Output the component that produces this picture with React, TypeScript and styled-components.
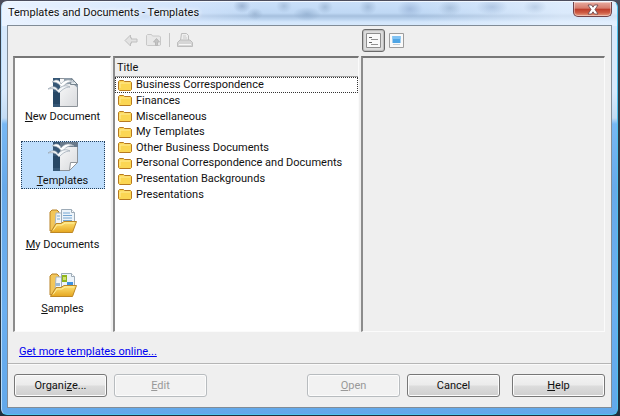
import React, { useState } from 'react';
import styled, { createGlobalStyle, css } from 'styled-components';

const GlobalStyle = createGlobalStyle`
  * { box-sizing: border-box; }
  body {
    margin: 0;
    background: #2b3f52;
    font-family: Roboto, "Open Sans", sans-serif;
    font-size: 11px;
    line-height: 16px;
    color: #111;
  }
  button { font: inherit; color: inherit; margin: 0; padding: 0; }
`;

const Desktop = styled.div`
  display: flex;
  height: 100vh;
  padding: 1px 2px 1px 1px;
  background: linear-gradient(#4d4e5e, #35404c 8%, #20303f);
`;

const Dialog = styled.section`
  flex: 1;
  min-width: 0;
  display: flex;
  flex-direction: column;
  padding: 0 5px 6px;
  border: 1px solid #4fc3ee;
  border-top-color: #f0f7ff;
  border-left-color: #b9ddfb;
  border-radius: 6px;
  background:
    radial-gradient(ellipse 9px 7px at 240px 4px, #7f99bd99, transparent),
    radial-gradient(ellipse 8px 6px at 253px 12px, #8fa9c899, transparent),
    radial-gradient(ellipse 8px 7px at 282px 4px, #8fa9c888, transparent),
    radial-gradient(ellipse 14px 7px at 305px 12px, #88a5c799, transparent),
    radial-gradient(ellipse 8px 7px at 323px 5px, #88a3c288, transparent),
    radial-gradient(ellipse 13px 9px at 408px 7px, #8faad099, transparent),
    radial-gradient(ellipse 9px 8px at 366px 5px, #88a3c488, transparent),
    radial-gradient(ellipse 12px 8px at 448px 6px, #8fa9c888, transparent),
    radial-gradient(ellipse 16px 8px at 490px 5px, #93add088, transparent),
    radial-gradient(ellipse 12px 7px at 533px 5px, #9bb3d077, transparent),
    linear-gradient(90deg, #eaf3ff 0, #dceaff99 180px, transparent 260px, transparent 420px, #e9f3ffaa 560px) 0 0 / 100% 24px no-repeat,
    linear-gradient(#c9dff9 0, #bfd8f4 11px, #a6c0de 14px, #b9d2ee 17px, #d3e6fb 20px, #d7e9fc 24px, #d7e9fc 90px, #c3dbf3 116px, #78b8f4 122px, #68aaea 45%, #6baff0 75%, #62a8ea);
`;

const TitleBar = styled.header`
  display: flex;
  align-items: flex-start;
  justify-content: space-between;
  height: 23px;
  flex: none;
`;

const DialogTitle = styled.h1`
  margin: 0;
  padding: 3px 1px;
  font-size: 11px;
  line-height: 16px;
  font-weight: 400;
  text-shadow: 0 0 5px #fff, 0 0 5px #fff;
`;

const CloseButton = styled.button`
  display: flex;
  justify-content: center;
  align-items: center;
  width: 39px;
  height: 15px;
  border: 1px solid #70434a;
  border-top: 0;
  border-radius: 0 0 5px 5px;
  background: linear-gradient(#e7aa9f, #d57b6c 45%, #bd3b29 50%, #cd5a42 75%, #e79b80);
  box-shadow: inset 0 0 0 1px #ffffff66;
`;

const Body = styled.main`
  flex: 1;
  min-height: 0;
  display: flex;
  flex-direction: column;
  border: 1px solid #818c97;
  background: #efefef;
`;

const columns = css`
  display: grid;
  grid-template-columns: 98px 246fr 244fr;
  column-gap: 2px;
`;

const Toolbar = styled.div`
  ${columns}
  flex: none;
  height: 30px;
  padding: 2px 6px 0 5px;
`;

const ToolGroup = styled.div<{ $start?: number }>`
  grid-column: ${p => p.$start ?? 'auto'};
  display: flex;
  align-items: center;
  padding-left: ${p => (p.$start === 2 ? 6 : 1)}px;
  height: 24px;
`;

const ToolButton = styled.button<{ $on?: boolean }>`
  display: flex;
  align-items: center;
  justify-content: center;
  width: 23px;
  height: 23px;
  border: ${p => (p.$on ? '1px solid #6a6a6a' : '1px solid transparent')};
  border-radius: 3px;
  background: ${p => (p.$on ? '#dedede' : 'transparent')};
  box-shadow: ${p => (p.$on ? 'inset 0 0 1px 1px #bbb' : 'none')};
`;

const ToolDivider = styled.span`
  width: 1px;
  height: 14px;
  margin: 0 3px 0 4px;
  background: #c4c4c4;
`;

const Panels = styled.div`
  ${columns}
  flex: 1;
  min-height: 0;
  padding: 0 6px 0 5px;
`;

const sunken = css`
  border: 1px solid #fbfbfb;
  border-top: 2px solid #777;
  border-left: 2px solid #8c8c8c;
`;

const Sidebar = styled.nav`
  ${sunken}
  display: flex;
  flex-direction: column;
  align-items: center;
  justify-content: space-between;
  padding: 19px 0 14px;
  background: #fff;
`;

const Category = styled.button<{ $selected: boolean }>`
  display: flex;
  flex-direction: column;
  align-items: center;
  justify-content: space-between;
  width: 84px;
  height: 48px;
  line-height: 14px;
  border: 1px ${p => (p.$selected ? 'dotted #24415e' : 'solid transparent')};
  background: ${p => (p.$selected ? '#bfdefc' : 'transparent')};
  white-space: nowrap;
`;

const ListPanel = styled.div`
  ${sunken}
  background: #fff;
  overflow: hidden;
`;

const FileTable = styled.table`
  display: block;
  thead, thead tr { display: block; }
`;

const ColumnHead = styled.th`
  display: block;
  height: 19px;
  padding: 2px;
  text-align: left;
  font-weight: 400;
  background: #efefef;
  border-bottom: 1px solid #a0a0a0;
`;

const Rows = styled.tbody`
  display: grid;
  grid-auto-rows: 1fr;
  height: 125px;
  line-height: 15px;
`;

const Row = styled.tr<{ $focused: boolean }>`
  display: flex;
  align-items: center;
  outline: ${p => (p.$focused ? '1px dotted #333' : 'none')};
  outline-offset: -1px;
`;

const Cell = styled.td`
  display: flex;
  align-items: center;
  gap: 4px;
  padding: 0 3px;
  white-space: nowrap;
`;

const Preview = styled.div`
  ${sunken}
`;

const LinkBar = styled.div`
  flex: none;
  height: 31px;
  padding: 12px 11px 0;
`;

const MoreLink = styled.a`
  color: #0000f0;
`;

const Footer = styled.footer`
  flex: none;
  display: flex;
  gap: 7px;
  padding: 10px 6px;
  border-top: 1px solid #b5b5b5;
  box-shadow: inset 0 1px #fafafa;
`;

const PushButton = styled.button<{ $push?: boolean; $apart?: boolean }>`
  width: 93px;
  height: 23px;
  margin-left: ${p => (p.$push ? 'auto' : p.$apart ? '5px' : '0')};
  border: 1px solid #777;
  border-radius: 3px;
  background: linear-gradient(#f3f3f3, #ebebeb 48%, #dcdcdc 52%, #cfcfcf);
  box-shadow: inset 0 0 0 1px #fcfcfc;
  &:disabled {
    color: #999;
    border-color: #b8bcbf;
    background: #f2f2f2;
  }
`;

function BackIcon() {
  return (
    <svg width="14" height="13" viewBox="0 0 14 13" fill="#e2e2e2" stroke="#c0c0c0">
      <path d="M1 6.5 6.5 1v3H8L7 5h6v3H7l1 1H6.5v3z" strokeLinejoin="round" />
    </svg>
  );
}

function UpFolderIcon() {
  return (
    <svg width="16" height="14" viewBox="0 0 16 14" fill="#e8e8e8" stroke="#c8c8c8">
      <path d="M.5 12V2.500l1-1h4l1 1.500h7l1 1v8l-1 .5h-12z" />
      <path d="M10.500 5.500 13.500 9h-2v3.500h-2V9h-2z" fill="#c4c4c4" stroke="#b8b8b8" />
    </svg>
  );
}

function PrinterIcon() {
  return (
    <svg width="16" height="15" viewBox="0 0 16 15" fill="#eee" stroke="#bdbdbd">
      <path d="M3.500 7.500 4.500.5h5l2 2v5" />
      <path d="M6 3h3M6 5h4" stroke="#ccc" />
      <path d="M.5 9.500 3 7h10l2.500 2.500v4H.5z" fill="#d6d6d6" />
      <path d="M2 11.500h12" stroke="#f7f7f7" />
    </svg>
  );
}

function PropertiesIcon() {
  return (
    <svg width="15" height="15" viewBox="0 0 15 15">
      <path d="M.5.5h14v14H.5z" fill="#fafafa" stroke="#8e8e8e" />
      <path d="M3 4.500h3M3 9.500h3" stroke="#666" />
      <path d="M5 6.500h7M5 11.500h7" stroke="#929292" />
    </svg>
  );
}

function PreviewIcon() {
  return (
    <svg width="15" height="15" viewBox="0 0 15 15">
      <path d="M.5.5h14v14H.5z" fill="#fafafa" stroke="#9d9d9d" />
      <path d="M3.500 3h8v7h-8z" fill="#4fa5e5" />
      <path d="M3.500 3h8v3h-8z" fill="#80c2f3" />
      <path d="M4 11.500h7" stroke="#c4ced6" />
    </svg>
  );
}

function DocumentIcon({ template }: { template?: boolean }) {
  const id = template ? 'template-page' : 'new-page';
  return (
    <svg width="32" height="31" viewBox="0 0 32 31">
      <defs>
        <linearGradient id={id} x2="1" y2="1">
          <stop stopColor="#fff" />
          <stop offset="1" stopColor="#d8dadd" />
        </linearGradient>
      </defs>
      <path d={template ? 'M7.500.5h23v20l-8 8h-15z' : 'M7.500.5h17l6 6v22h-23z'} fill={`url(#${id})`} stroke="#8c9298" />
      <path d="M6 0h7v29H6z" fill="#365776" />
      <path d="M6 14h7v12H6z" fill="#274765" />
      {template ? (
        <>
          <path d="M13 0h18v5H20l-7 4z" fill="#68798a" />
          <path d="m22.500 28.500 1-8 7 0z" fill="#fff" stroke="#909498" />
        </>
      ) : (
        <>
          <path d="M17 0h8l6 7v4c-3-5-7-6-14-4z" fill="#8d9ba8" />
          <path d="m24.500.5-1 6 7 0z" fill="#e5ebef" stroke="#76848f" />
        </>
      )}
      <path d="M5 4c5-4 8-1 9 2 4-5 9-5 13-2-6-1-9 2-12 6-3-5-6-6-10-6z" fill="#fff" stroke="#a3afb9" strokeWidth=".7" />
      <path d="M1 11c5-4 9-2 10 1 4-5 8-5 12-3-5 0-8 3-11 6-3-4-6-5-11-4z" fill="#f4f7f9" stroke="#93a1ad" strokeWidth=".7" />
    </svg>
  );
}

function OpenFolderIcon({ samples }: { samples?: boolean }) {
  const id = samples ? 'samples-folder' : 'documents-folder';
  return (
    <svg width="30" height="28" viewBox="0 -2 30 28">
      <defs>
        <linearGradient id={id} x2="0" y2="1">
          <stop stopColor="#ffe476" />
          <stop offset="1" stopColor="#e5a51e" />
        </linearGradient>
      </defs>
      <path d="M2 23V4l2-2h5l2 2v5l-5 13z" fill="#f2c659" stroke="#b88226" />
      <path d="M8 5h10v14H7z" fill="#f2f6f9" stroke="#a8b7c4" />
      <path d="M13.500 1.500h10l3 3V18h-13z" fill="#edf4fa" stroke="#9dabb7" />
      <path d="m23.500 1.500 0 3h3" fill="#fff" stroke="#9dabb7" />
      {samples ? (
        <>
          <path d="M14 3h5v7h-5z" fill="#91b51c" />
          <path d="M15 5h3v3h-3z" fill="#cfdf70" />
          <path d="M19 10h6v5h-6z" fill="#3d91df" />
          <path d="M8 11h4v3H8z" fill="#9bbad4" />
        </>
      ) : (
        <path d="M15 5h7M15 7.500h9M15 10h9M15 12.500h9M9 8h3M9 11h3" stroke="#74a6d2" />
      )}
      <path d="M2.500 24.500 8 15.500h5l3-2h12.500l-4 11z" fill={`url(#${id})`} stroke="#bd8725" strokeLinejoin="round" />
      <path d="M5 22.500 9 17h5l3-2h9" fill="none" stroke="#fff0a0" />
    </svg>
  );
}

function FolderIcon() {
  return (
    <svg width="14" height="12" viewBox="0 0 14 12">
      <path d="M.5 10.500v-8l1-1h4l1 1h6l1 1v7l-1 1h-11z" fill="#fbd653" stroke="#b77a20" />
      <path d="M2 9V4h10" fill="none" stroke="#ffeb94" />
    </svg>
  );
}

function Accel({ text, at = 0 }: { text: string; at?: number }) {
  return <span>{text.slice(0, at)}<u>{text[at]}</u>{text.slice(at + 1)}</span>;
}

const categories = [
  { name: 'New Document', icon: <DocumentIcon /> },
  { name: 'Templates', icon: <DocumentIcon template /> },
  { name: 'My Documents', icon: <OpenFolderIcon /> },
  { name: 'Samples', icon: <OpenFolderIcon samples /> },
];

const folders = [
  'Business Correspondence',
  'Finances',
  'Miscellaneous',
  'My Templates',
  'Other Business Documents',
  'Personal Correspondence and Documents',
  'Presentation Backgrounds',
  'Presentations',
];

export default function App() {
  const [category, setCategory] = useState('Templates');
  const [folder, setFolder] = useState(folders[0]);

  return (
    <>
      <GlobalStyle />
      <Desktop>
        <Dialog aria-label="Templates and Documents">
          <TitleBar>
            <DialogTitle>Templates and Documents - Templates</DialogTitle>
            <CloseButton aria-label="Close">
              <svg width="12" height="11" viewBox="0 0 12 11">
                <path d="M1 1h3.500L6 3.200 7.500 1H11L8 5.500l3 4.500H7.500L6 7.800 4.500 10H1l3-4.500z" fill="#fff" stroke="#624149" strokeWidth=".8" />
              </svg>
            </CloseButton>
          </TitleBar>
          <Body>
            <Toolbar>
              <ToolGroup $start={2}>
                <ToolButton aria-label="Back" disabled><BackIcon /></ToolButton>
                <ToolButton aria-label="Up one level" disabled><UpFolderIcon /></ToolButton>
                <ToolDivider />
                <ToolButton aria-label="Print" disabled><PrinterIcon /></ToolButton>
              </ToolGroup>
              <ToolGroup $start={3}>
                <ToolButton aria-label="Document properties" aria-pressed $on><PropertiesIcon /></ToolButton>
                <ToolButton aria-label="Preview"><PreviewIcon /></ToolButton>
              </ToolGroup>
            </Toolbar>
            <Panels>
              <Sidebar>
                {categories.map(c => (
                  <Category key={c.name} $selected={c.name === category} onClick={() => setCategory(c.name)}>
                    {c.icon}
                    <Accel text={c.name} />
                  </Category>
                ))}
              </Sidebar>
              <ListPanel>
                <FileTable cellSpacing={0}>
                  <thead><tr><ColumnHead scope="col">Title</ColumnHead></tr></thead>
                  <Rows>
                    {folders.map(name => (
                      <Row key={name} $focused={name === folder} onClick={() => setFolder(name)}>
                        <Cell><FolderIcon />{name}</Cell>
                      </Row>
                    ))}
                  </Rows>
                </FileTable>
              </ListPanel>
              <Preview />
            </Panels>
            <LinkBar><MoreLink href="#templates">Get more templates online...</MoreLink></LinkBar>
            <Footer>
              <PushButton><Accel text="Organize..." at={6} /></PushButton>
              <PushButton disabled><Accel text="Edit" /></PushButton>
              <PushButton $push disabled><Accel text="Open" /></PushButton>
              <PushButton>Cancel</PushButton>
              <PushButton $apart><Accel text="Help" /></PushButton>
            </Footer>
          </Body>
        </Dialog>
      </Desktop>
    </>
  );
}
